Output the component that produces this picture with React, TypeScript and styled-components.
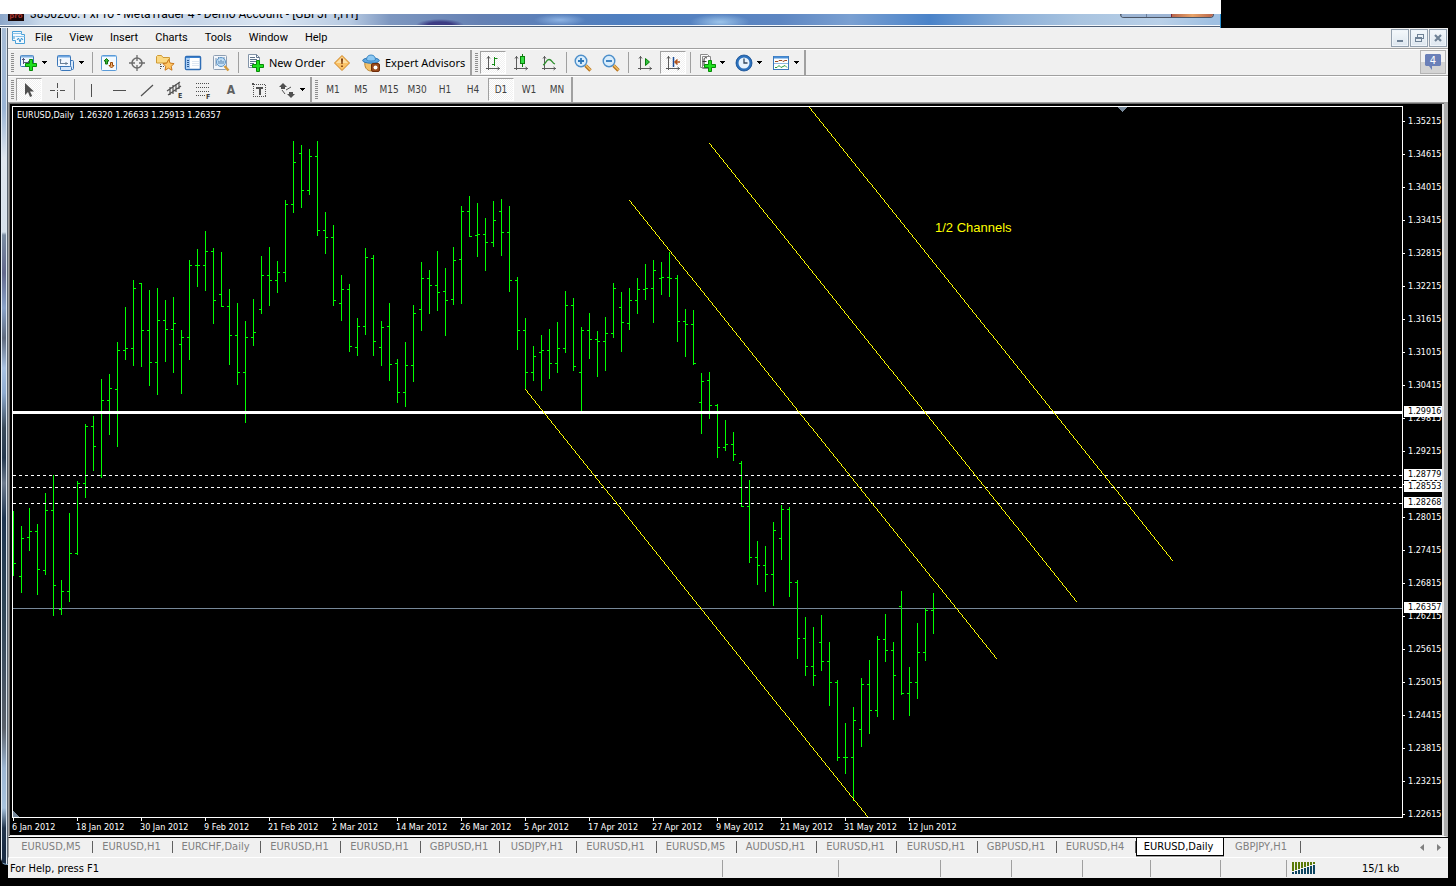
import React from "react";
import styled, { createGlobalStyle, css } from "styled-components";

const UI_FONT = `"Noto Sans", "Open Sans", sans-serif`;
const TAHOMA = `"DejaVu Sans Condensed", "Noto Sans", sans-serif`;

const GlobalStyle = createGlobalStyle`
  * { box-sizing: border-box; }
  html, body { margin: 0; background: #000; }
  body { font: 11px ${UI_FONT}; color: #000; }
  button { font: inherit; color: inherit; border: 0; padding: 0; margin: 0; background: none; white-space: nowrap; }
  svg { display: block; flex: none; }
`;

/* ---------- window frame ---------- */

const Page = styled.div`
  min-height: 100vh;
  background: #000;
`;

const TopStrip = styled.header`
  margin-right: 235px;
  padding-top: 14px;
  background: #fff;
`;

const TitleBar = styled.div`
  display: flex;
  align-items: flex-start;
  height: 14px;
  padding-left: 8px;
  padding-right: 6px;
  overflow: hidden;
  border-right: 1px solid #2a8fd0;
  background:
    linear-gradient(#0000 11px, #f4f8fc 11px, #f4f8fc 12px, #4f6078 12px, #4f6078 13px, #eef3f8 13px),
    radial-gradient(ellipse 24px 6px at 440px 11px, #3c3c84 50%, #3c3c8400),
    radial-gradient(ellipse 26px 6px at 560px 6px, #8fb4e4, #8fb4e400),
    radial-gradient(ellipse 30px 8px at 720px 8px, #9cc4ea, #9cc4ea00),
    linear-gradient(90deg, #8ba6c9 0, #c8d8ea 40px, #e4ecf5 120px, #c6d5e8 190px, #dbe6f2 270px, #b7cae2 350px, #7d97c0 390px, #6581b4 480px, #4f7fc0 620px, #5d86c2 780px, #7aa0d2 850px, #4a83c9 930px, #8bafd8 1010px, #a9c4e0 1080px, #b9d0e8 1160px, #9fc0e2 1213px);
`;

const TitleText = styled.span`
  flex: 1;
  margin: -8px 0 0 6px;
  font-family: Roboto, sans-serif;
  font-size: 12px;
  line-height: 16px;
  white-space: nowrap;
`;

const Caption = styled.div`
  display: flex;
  height: 4px;
  border: 1px solid #4b5565;
  border-top: 0;
  border-radius: 0 0 4px 4px;
  overflow: hidden;
`;

const CaptionPart = styled.span<{ $close?: boolean }>`
  width: ${(p) => (p.$close ? 42 : 25)}px;
  border-left: 1px solid ${(p) => (p.$close ? "#7c2436" : "#6a7f9c")};
  background: ${(p) => (p.$close ? "linear-gradient(90deg, #b8664c, #e8a368 50%, #b8664c)" : "#9db5d4")};
`;

const Body = styled.div`
  display: flex;
  margin-right: 8px;
`;

const LeftEdge = styled.div`
  width: 8px;
  margin-bottom: 13px;
  border-left: 1px solid #10161e;
  border-bottom: 1px solid #7fa6c8;
  border-bottom-left-radius: 7px;
  background:
    linear-gradient(90deg, #e3ebf3 1px, #0000 1px, #0000 5px, #dde6ee 5px, #dde6ee 6px, #5a6470 6px),
    linear-gradient(#a8bdd6, #9ab4d4 80px, #dfe6ee 130px, #d4dfea 204px, #7b8da3 207px, #62688c 245px, #8aa3c9 280px, #5e6a7e 310px, #a9c2e2 340px, #8fabcf 365px, #3a4a5a 400px, #24384e 430px, #6d7b8e 455px, #1e3550 490px, #2e4455 580px, #404f60 640px, #59606a 700px, #9db6d2 740px, #a8c3de 780px, #22354c 800px, #1a2c44 820px);
`;

const WindowArea = styled.main`
  flex: 1;
  min-width: 0;
  background: #f0f0f0;
`;

/* ---------- menu ---------- */

const MenuBar = styled.nav`
  display: flex;
  align-items: center;
  height: 22px;
  padding: 0 1px 2px 3px;
  border-bottom: 1px solid #fff;
  box-shadow: inset 0 -1px #a0a0a0;
`;

const MenuItem = styled.button`
  height: 18px;
  padding: 0 8px;
  font-family: Roboto, sans-serif;
  font-size: 11px;
  line-height: 18px;
`;

const MenuItems = styled.div`
  display: flex;
  flex: 1;
  gap: 1px;
`;

const MdiButtons = styled.div`
  display: flex;
  gap: 1px;
`;

const MdiButton = styled.button`
  display: grid;
  place-items: center;
  width: 18px;
  height: 18px;
  border: 1px solid #93a0ae;
  background: linear-gradient(#f4f8fb, #dde6ef);
  box-shadow: inset 0 0 0 1px #eff5fa;
`;

/* ---------- tool bars ---------- */

const ToolRow = styled.div<{ $last?: boolean }>`
  display: flex;
  align-items: stretch;
  height: ${(p) => (p.$last ? 25 : 27)}px;
  ${(p) =>
    !p.$last &&
    css`
      padding-bottom: 2px;
      background: linear-gradient(#f0f0f0 25px, #a0a0a0 25px, #a0a0a0 26px, #fff 26px);
    `}
`;

const ToolGroup = styled.div`
  display: flex;
  align-items: center;
  border-right: 2px solid #a0a0a0;
`;

const Grip = styled.span`
  width: 3px;
  height: 19px;
  margin: 0 1px 0 3px;
  background: repeating-linear-gradient(#8e8e8e 0 1px, #f0f0f0 1px 2px);
`;

const Divider = styled.span`
  width: 1px;
  height: 21px;
  margin: 0 2px 0 3px;
  background: #a0a0a0;
`;

const ToolButton = styled.button<{ $pressed?: boolean }>`
  display: grid;
  place-items: center;
  width: 26px;
  height: 23px;
  margin: 0 1px;
  ${(p) =>
    p.$pressed &&
    css`
      border: 1px solid #fff;
      border-top-color: #a0a0a0;
      border-left-color: #a0a0a0;
      background: repeating-conic-gradient(#fff 0 25%, #f0f0f0 0 50%) 0 0 / 2px 2px;
    `}
`;

const DropButton = styled.button`
  display: flex;
  align-items: center;
  gap: 4px;
  width: 37px;
  padding-left: 5px;
`;

const LabelButton = styled.button<{ $width: number }>`
  display: flex;
  align-items: center;
  gap: 4px;
  width: ${(p) => p.$width}px;
  padding-left: 6px;
  font: 11px ${UI_FONT};
`;

const Period = styled(ToolButton)`
  font: 10px ${TAHOMA};
  color: #404040;
`;

const LetterTool = styled(ToolButton)`
  font: bold 12px ${TAHOMA};
  color: #606060;
`;

const ChatButton = styled.button`
  display: grid;
  place-items: center;
  width: 26px;
  height: 24px;
  margin: 0 2px 0 auto;
  border: 1px solid #b4b4b4;
  background: linear-gradient(#f2f2f2 50%, #d4d4d4 50%);
`;

/* ---------- chart ---------- */

const ChartFrame = styled.section`
  display: grid;
  grid-template-columns: minmax(0, 1fr) 39px;
  padding: 2px 2px 0 2px;
  border-top: 1px solid #a0a0a0;
  border-left: 1px solid #a0a0a0;
  border-right: 4px solid #ababab;
  border-bottom: 1px solid #fff;
  background: #000;
  box-shadow: inset 1px 1px #696969, inset -2px -1px #e3e3e3;
  color: #fff;
  font: 9px ${TAHOMA};
`;

const Plot = styled.div`
  position: relative;
  height: 712px;
  margin-left: 1px;
  margin-top: 1px;
  border: 1px solid #fff;
  overflow: hidden;
`;

const Quote = styled.div`
  position: absolute;
  top: 2px;
  left: 4px;
  line-height: 12px;
  white-space: pre;
`;

const PriceAxis = styled.div`
  position: relative;
  height: 712px;
  overflow: hidden;
`;

const PriceTick = styled.div`
  display: flex;
  align-items: center;
  gap: 3px;
  height: 33px;
  line-height: 11px;
  &::before {
    content: "";
    width: 2px;
    height: 1px;
    background: #fff;
  }
`;

const PriceTag = styled.div<{ $y: number }>`
  position: absolute;
  top: ${(p) => p.$y}px;
  left: 1px;
  width: 38px;
  height: 11px;
  padding-left: 4px;
  background: #fff;
  color: #000;
  line-height: 11px;
`;

const TimeAxis = styled.div`
  display: flex;
  height: 18px;
  margin-left: 1px;
  overflow: hidden;
`;

const TimeTick = styled.div`
  flex: none;
  width: 64px;
  line-height: 12px;
  white-space: nowrap;
  &::before {
    content: "";
    display: block;
    width: 1px;
    height: 3px;
    margin-left: 1px;
    background: #fff;
  }
`;

/* ---------- chart tabs and status ---------- */

const TabStrip = styled.div`
  display: flex;
  height: 21px;
  border-top: 1px solid #000;
  border-bottom: 1px solid #fff;
  border-left: 1px solid #a0a0a0;
  padding-left: 3px;
  font: 11px ${TAHOMA};
`;

const Tab = styled.button<{ $width: number; $active?: boolean }>`
  flex: none;
  width: ${(p) => p.$width}px;
  height: 18px;
  padding-right: 3px;
  color: #808080;
  line-height: 16px;
  background: linear-gradient(#606060, #606060) right 0 top 3px / 1px 12px no-repeat;
  ${(p) =>
    p.$active &&
    css`
      border: 1px solid #000;
      border-top: 0;
      background: #fff;
      color: #000;
      box-shadow: 0 1px #a0a0a0;
    `}
`;

const Scroller = styled.div`
  display: flex;
  gap: 8px;
  align-items: center;
  margin-left: auto;
  padding-right: 5px;
`;

const ScrollButton = styled.button`
  display: grid;
  place-items: center;
  width: 9px;
`;

const StatusBar = styled.footer`
  display: flex;
  align-items: center;
  height: 20px;
  font: 11px ${TAHOMA};
`;

const StatusHelp = styled.div`
  flex: 1;
  padding-left: 2px;
`;

const StatusCell = styled.div<{ $width: number }>`
  display: flex;
  align-items: center;
  gap: 46px;
  width: ${(p) => p.$width}px;
  height: 17px;
  padding-left: 5px;
  border-left: 1px solid #a0a0a0;
`;

/* ---------- icons ---------- */

const Svg = ({ w = 18, h = 18, children, crisp }: { w?: number; h?: number; children: React.ReactNode; crisp?: boolean }) => (
  <svg width={w} height={h} viewBox={`0 0 ${w} ${h}`} fill="none" aria-hidden="true" shapeRendering={crisp ? "crispEdges" : undefined}>
    {children}
  </svg>
);

const Caret = () => (
  <Svg w={5} h={3} crisp>
    <path d="M0 0h5v1h-1v1h-1v1h-1v-1h-1v-1h-1z" fill="#000" />
  </Svg>
);

const GreenPlus = ({ x, y }: { x: number; y: number }) => (
  <path
    transform={`translate(${x} ${y})`}
    d="M4.500 .5h3v4h4v3h-4v4h-3v-4h-4v-3h4z"
    fill="#1fe01f"
    stroke="#078a07"
  />
);

const DocIcon = () => (
  <Svg w={16} h={16}>
    <path d="M1.500 1.500h9v3h3v9h-9v-3h-3z" fill="#f3f9fe" stroke="#4aa0d8" />
    <path d="M1.500 3.500h9M4.500 6.500h9" stroke="#8cc4ea" />
    <path d="M3 6v3M6 10l1.500-2 1.500 4 1.500-4 1.500 2" stroke="#3b93d0" />
  </Svg>
);

const NewChartIcon = () => (
  <Svg>
    <rect x=".5" y="1.500" width="13" height="11" rx="1" fill="#eef6ff" stroke="#3a76b8" />
    <path d="M1 2.500h12" stroke="#7fb0e0" strokeWidth="2" />
    <path d="M3.500 4v6M2 5.500h3M4 8.500h6M8.500 7v3" stroke="#557" />
    <GreenPlus x={5} y={5} />
  </Svg>
);

const ProfilesIcon = () => (
  <Svg>
    <rect x="5.500" y="6.500" width="11" height="9" rx="1" fill="#d8e8fa" stroke="#3a76b8" />
    <rect x="3.500" y="12.500" width="11" height="4" rx="1" fill="#d8e8fa" stroke="#3a76b8" />
    <rect x=".5" y="1.500" width="13" height="11" rx="1" fill="#f2f8ff" stroke="#3a76b8" />
    <path d="M1 2.500h12" stroke="#6fa6e0" strokeWidth="2" />
    <path d="M3.500 5v5M2.500 6h2M3 9.500h8M9 8v3" stroke="#6a8098" />
  </Svg>
);

const MarketIcon = () => (
  <Svg>
    <rect x="1.500" y="1.500" width="15" height="15" rx="1" fill="#f4faff" stroke="#5b9bd8" />
    <path d="M2 2.500h14" stroke="#9cc8f0" />
    <path d="M6.500 4.500l2.500 2.500h-1.500v3h-2v-3h-1.500z" fill="#35b835" stroke="#107010" />
    <path d="M11.500 14l2.500-2.500h-1.500v-3h-2v3h-1.500z" fill="#f0b070" stroke="#9a4a08" />
  </Svg>
);

const TargetIcon = () => (
  <Svg>
    <circle cx="9" cy="9" r="5" stroke="#6c6c6c" strokeWidth="1.500" />
    <path d="M9 1v6M9 11v6M1 9h6M11 9h6" stroke="#6c6c6c" strokeWidth="1.300" />
  </Svg>
);

const STAR = "M0 -5.500l1.700 3.600 3.900 .5-2.900 2.700 .8 3.900-3.500-2-3.500 2 .8-3.900-2.900-2.700 3.900-.5z";

const FolderStarIcon = () => (
  <Svg w={19}>
    <path d="M.5 9V2.500l1-1h4l1.500 2h6.500V9z" fill="#fbd983" stroke="#cf9a35" />
    <path d="M4.500 10v6M5 12.500h3" stroke="#555" strokeDasharray="1 1" />
    <path transform="translate(12.500 11)" d={STAR} fill="#ffc766" stroke="#c9781c" />
  </Svg>
);

const ListIcon = () => (
  <Svg>
    <rect x="1.500" y="2.500" width="15" height="13" rx="1" fill="#fff" stroke="#2f6db5" strokeWidth="1.500" />
    <path d="M2 3.500h14" stroke="#3b82d0" />
    <rect x="2" y="4" width="4" height="11" fill="#a9cdf4" />
    <path d="M3 6.500h2M3 8.500h2M3 10.500h2M3 12.500h2" stroke="#2a5a98" />
    <path d="M8 7.500h7M8 9.500h7M8 11.500h7" stroke="#dfe8f2" />
  </Svg>
);

const TesterIcon = () => (
  <Svg>
    <rect x="1.500" y="1.500" width="13" height="14" rx="1" fill="#f2f6fb" stroke="#8e9eb2" />
    <path d="M4 4v8M6.500 3v5M9 4v4M12 3v6" stroke="#7890aa" />
    <circle cx="9" cy="8" r="4.500" fill="#b8dcf8cc" stroke="#5d94c8" />
    <path d="M7 7v3M9 6v4M11 7v3" stroke="#5b85b0" />
    <path d="M12.500 12l4 4.500" stroke="#d39a3c" strokeWidth="2.500" />
  </Svg>
);

const OrderIcon = () => (
  <Svg>
    <path d="M1.500 .5h8l3 3v10h-11z" fill="#fbfdff" stroke="#8394a8" />
    <path d="M9.500 .5v3h3" stroke="#60748c" />
    <path d="M3 3.500h5M3 5.500h7M3 7.500h7M3 9.500h4M3 11.500h3" stroke="#5f748c" />
    <GreenPlus x={5} y={6} />
  </Svg>
);

const AlertIcon = () => (
  <Svg>
    <path d="M9 1.500L16.500 9 9 16.500 1.500 9z" fill="#fbc266" stroke="#d08420" strokeLinejoin="round" />
    <path d="M9 3L15 9H3z" fill="#fde0a4" />
    <path d="M8 4.500h2l-.4 5.500h-1.200zM8.200 11.500h1.600v1.600h-1.600z" fill="#7a3608" />
  </Svg>
);

const AdvisorIcon = () => (
  <Svg w={19}>
    <path d="M3 8h12c1 5-2 9-6 9S2 13 3 8z" fill="#f3c26b" stroke="#b9822c" />
    <ellipse cx="9" cy="6.500" rx="8.300" ry="2.700" fill="#5fa8e2" stroke="#2e75b4" />
    <path d="M4.500 6c0-3 1.500-5 4.500-5s4.500 2 4.500 5c-2 1.400-7 1.400-9 0z" fill="#8cc8f2" stroke="#3f8ac6" />
    <rect x="9.500" y="9.500" width="8" height="8" rx="1.500" fill="#9a4a1c" stroke="#6e2d0a" />
    <circle cx="13.500" cy="13.500" r="2" fill="#fff" />
  </Svg>
);

const Axes = () => <path d="M4.500 2v14M2 14.500h14M3 4.500l1.500-2 1.500 2M13.500 13l2 1.500-2 1.500" stroke="#5c5c5c" />;

const BarsIcon = () => (
  <Svg>
    <Axes />
    <path d="M10.500 3v9M10.500 4.500h3M8 10.500h3" stroke="#148a14" />
  </Svg>
);
const CandleIcon = () => (
  <Svg>
    <Axes />
    <path d="M10.500 0v13" stroke="#0b7d0b" />
    <rect x="8.500" y="2.500" width="4" height="7" fill="#35dd45" stroke="#0b7d0b" />
  </Svg>
);
const LineIcon = () => (
  <Svg>
    <Axes />
    <path d="M3 11c3-1 3-5.500 6-5.500S12 9 15 10" stroke="#2f8f2f" strokeWidth="1.300" />
  </Svg>
);
const Magnifier = ({ plus }: { plus?: boolean }) => (
  <Svg>
    <path d="M11.500 11.500l5 5" stroke="#b8731c" strokeWidth="3.400" />
    <path d="M11.500 11l5 5" stroke="#f0bd62" strokeWidth="1.600" />
    <circle cx="7" cy="7" r="5.800" fill="#d9edfc" stroke="#4d8fca" strokeWidth="1.400" />
    <path d={plus ? "M4 7h6M7 4v6" : "M4 7h6"} stroke="#2f78ba" strokeWidth="1.800" />
  </Svg>
);
const ScrollIcon = () => (
  <Svg>
    <Axes />
    <path d="M9.500 4.500v7l4-3.500z" fill="#2fc43f" stroke="#0b7d0b" />
  </Svg>
);
const ShiftIcon = () => (
  <Svg>
    <Axes />
    <path d="M9.500 3v10" stroke="#1c4f9a" strokeWidth="1.500" />
    <path d="M16 8h-4.500M13.500 5.500L11 8l2.500 2.500" stroke="#b0521a" strokeWidth="1.500" />
  </Svg>
);
const IndicatorIcon = () => (
  <Svg>
    <path d="M4.500 2.500h8v12h-8zM2.500 .5h7l3 3v10h-10z" fill="#fbfbfb" stroke="#8b8b8b" />
    <path d="M9 4c-2-1-3 0-3 2v6M4.500 7.500h4" stroke="#333" />
    <GreenPlus x={6} y={6} />
  </Svg>
);
const ClockIcon = () => (
  <Svg>
    <circle cx="9" cy="9" r="6.800" fill="#e6f2fd" stroke="#2c71bd" strokeWidth="2.600" />
    <circle cx="9" cy="9" r="8" stroke="#174f92" strokeWidth=".8" />
    <path d="M9 4.500V9h3.500" stroke="#33475e" strokeWidth="1.300" />
  </Svg>
);
const TemplateIcon = () => (
  <Svg>
    <rect x="1.500" y="2.500" width="15" height="13" fill="#fff" stroke="#3a78bb" />
    <path d="M2 3.500h14" stroke="#4a90d8" strokeWidth="2" />
    <path d="M2 9.500h14" stroke="#90b8e0" />
    <path d="M3 7.500h3l1-1h3l1 1 2-1h2" stroke="#a04a20" />
    <path d="M3 13.500h2l2-2 2 2 2-1 2-1 2 2" stroke="#2c9a3a" />
  </Svg>
);

const CursorIcon = () => (
  <Svg>
    <path d="M5 2v12l3-3 2 5 2.200-1-2.200-4.500h4z" fill="#505050" />
  </Svg>
);
const CrossIcon = () => (
  <Svg crisp>
    <path d="M9.500 2v5M9.500 11v6M2 9.500h5M12 9.500h5M9 9.500h1" stroke="#505050" />
  </Svg>
);
const VLineIcon = () => (
  <Svg crisp>
    <path d="M9.500 3v13" stroke="#505050" />
  </Svg>
);
const HLineIcon = () => (
  <Svg crisp>
    <path d="M3 9.500h13" stroke="#505050" />
  </Svg>
);
const TrendIcon = () => (
  <Svg>
    <path d="M3 15L15 4" stroke="#505050" strokeWidth="1.200" />
  </Svg>
);
const SmallLetter = styled.text`
  font: bold 7px ${TAHOMA};
  fill: #404040;
`;
const ChannelIcon = () => (
  <Svg>
    <path d="M1 10L14 1M2 14L15 5M4 6v8M7 4v9M10 3v8M13 1v7" stroke="#505050" strokeWidth="1.200" />
    <SmallLetter x="12" y="17">E</SmallLetter>
  </Svg>
);
const FiboIcon = () => (
  <Svg crisp>
    <path d="M2 2.500h14M2 6.500h14M2 10.500h14M2 14.500h9" stroke="#505050" strokeDasharray="1 1" />
    <SmallLetter x="12" y="18">F</SmallLetter>
  </Svg>
);
const LabelIcon = () => (
  <Svg crisp>
    <rect x="3.500" y="3.500" width="12" height="12" stroke="#505050" strokeDasharray="1 1" />
    <path d="M2 2h2v2h-2zM6 6h7v2h-7zM8.500 6h2v8h-2z" fill="#505050" />
  </Svg>
);
const ArrowsIcon = () => (
  <Svg>
    <path d="M5 2l4 4H7v2H3V6H1zM13 17l-4-4h2v-2h4v2h2z" fill="#505050" />
    <path d="M4 9l3 4M8 9l5-3" stroke="#505050" />
  </Svg>
);
const ChatIcon = () => (
  <svg width="16" height="16" viewBox="0 0 16 16" aria-hidden="true">
    <path d="M1 0h14l1 1v10l-1 1H7v4l-3-4H1l-1-1V1z" fill="#6b80b8" />
    <text x="8" y="10" textAnchor="middle" fill="#fff" fontSize="10" fontFamily="DejaVu Sans">4</text>
  </svg>
);
const LogoIcon = () => (
  <svg width="16" height="16" viewBox="0 0 16 16" aria-hidden="true">
    <rect width="16" height="16" fill="#170607" />
    <text x="8" y="13" textAnchor="middle" fill="#a3352f" fontSize="7" fontWeight="bold" fontFamily="DejaVu Sans">pro</text>
  </svg>
);
const LogoBox = styled.span`
  margin-top: -9px;
`;

const TrafficIcon = () => (
  <Svg w={24} h={12} crisp>
    {[...Array(8)].map((_, i) => {
      const split = 8 - i;
      return (
        <g key={i}>
          <rect x={i * 3} y="0" width="2" height={split + 1} fill="#5a7a08" />
          <rect x={i * 3} y={split + 2} width="2" height={10 - split} fill="#0c4460" />
        </g>
      );
    })}
  </Svg>
);

/* ---------- data ---------- */

// Daily bars, eight pixels apart: [high, low, open, close] as heights on the chart.
const BARS: [number, number, number, number][] = [
  [511, 576, 563, 563], [526, 593, 576, 538], [508, 551, 537, 531], [524, 595, 531, 569], [493, 575, 570, 510],
  [475, 616, 510, 585], [580, 615, 609, 591], [513, 602, 591, 553], [481, 555, 553, 483], [424, 498, 483, 426],
  [416, 471, 426, 446], [379, 478, 475, 400], [374, 435, 400, 388], [342, 447, 389, 350], [307, 360, 350, 348],
  [280, 366, 348, 288], [283, 367, 283, 330], [290, 386, 330, 362], [288, 395, 362, 320], [300, 362, 320, 329],
  [297, 373, 329, 323], [330, 394, 344, 337], [260, 360, 337, 265], [249, 287, 265, 265], [231, 291, 265, 251],
  [248, 324, 251, 300], [252, 307, 294, 306], [289, 365, 306, 335], [303, 385, 335, 372], [321, 423, 372, 337],
  [299, 346, 337, 332], [256, 314, 309, 275], [247, 306, 275, 280], [261, 293, 280, 272], [200, 282, 272, 204],
  [141, 213, 204, 162], [145, 208, 153, 190], [149, 195, 190, 156], [141, 236, 156, 230], [212, 254, 230, 237],
  [225, 306, 237, 300], [275, 321, 303, 289], [284, 352, 289, 346], [318, 356, 347, 326], [248, 335, 326, 257],
  [255, 356, 258, 341], [321, 366, 347, 327], [303, 381, 326, 364], [359, 403, 363, 392], [342, 407, 392, 365],
  [305, 382, 365, 313], [262, 331, 309, 278], [270, 314, 278, 285], [251, 311, 285, 292], [268, 336, 291, 300],
  [247, 305, 299, 260], [206, 304, 259, 211], [196, 237, 211, 236], [203, 257, 235, 234], [218, 271, 234, 242],
  [201, 247, 242, 220], [199, 256, 211, 232], [206, 292, 232, 280], [277, 350, 280, 330], [318, 390, 330, 372],
  [346, 381, 372, 356], [335, 391, 352, 350], [329, 379, 350, 363], [322, 373, 363, 348], [291, 353, 348, 305],
  [298, 371, 305, 366], [327, 411, 372, 330], [313, 359, 330, 339], [331, 377, 339, 341], [317, 371, 341, 333],
  [283, 338, 333, 288], [292, 352, 307, 322], [288, 330, 323, 300], [278, 314, 300, 289], [264, 300, 289, 288],
  [260, 323, 288, 270], [262, 295, 278, 277], [252, 297, 277, 278], [275, 342, 278, 321], [309, 357, 321, 324],
  [310, 365, 324, 363], [373, 434, 402, 381], [372, 419, 380, 405], [404, 458, 405, 447], [420, 451, 447, 444],
  [432, 461, 444, 454], [461, 507, 463, 506], [480, 563, 506, 557], [541, 585, 557, 565], [546, 592, 565, 574],
  [522, 606, 574, 530], [505, 560, 538, 509], [507, 597, 509, 582], [580, 659, 582, 638], [617, 676, 638, 666],
  [627, 686, 666, 675], [615, 671, 642, 661], [642, 706, 661, 682], [680, 761, 682, 757], [723, 774, 757, 757],
  [707, 801, 757, 720], [678, 747, 729, 684], [660, 734, 684, 710], [636, 717, 710, 639], [614, 662, 639, 650],
  [642, 720, 650, 675], [591, 695, 606, 693], [667, 716, 693, 682], [623, 699, 682, 652], [608, 661, 652, 610],
  [593, 634, 610, 608],
];

const barPath = BARS.map(([high, low, open, close], i) => {
  const x = 13 + i * 8;
  return `M${x} ${high}h1V${low}h-1zM${x - 2} ${open}h2v1h-2zM${x + 1} ${close}h2v1h-2z`;
}).join("");

// Trend lines [x1, y1, x2, y2], drawn unsmoothed with one pixel on each row.
const TRENDS = [
  [525, 389, 867, 816],
  [629, 200, 996, 658],
  [709, 143, 1076, 601],
  [809, 107, 1172, 560],
];

const trendPath = TRENDS.map(([x1, y1, x2, y2]) =>
  Array.from({ length: y2 - y1 + 1 }, (_, i) => {
    const x = Math.round(x1 + (i * (x2 - x1)) / (y2 - y1));
    return `M${x} ${y1 + i}h1v1h-1z`;
  }).join(""),
).join("");

const DATES = [
  "6 Jan 2012", "18 Jan 2012", "30 Jan 2012", "9 Feb 2012", "21 Feb 2012", "2 Mar 2012", "14 Mar 2012", "26 Mar 2012",
  "5 Apr 2012", "17 Apr 2012", "27 Apr 2012", "9 May 2012", "21 May 2012", "31 May 2012", "12 Jun 2012",
];

const PRICES = [...Array(22)].map((_, i) => (1.35215 - i * 0.006).toFixed(5));

const TAGS: [string, number][] = [
  ["1.29916", 301], ["1.28779", 364], ["1.28553", 376], ["1.28268", 392], ["1.26357", 497],
];

const TABS: [string, number][] = [
  ["EURUSD,M5", 81], ["EURUSD,H1", 80], ["EURCHF,Daily", 88], ["EURUSD,H1", 80], ["EURUSD,H1", 80], ["GBPUSD,H1", 79],
  ["USDJPY,H1", 77], ["EURUSD,H1", 80], ["EURUSD,M5", 80], ["AUDUSD,H1", 80], ["EURUSD,H1", 80], ["EURUSD,H1", 81],
  ["GBPUSD,H1", 79], ["EURUSD,H4", 79], ["EURUSD,Daily", 88], ["GBPJPY,H1", 77],
];

const MENUS = ["File", "View", "Insert", "Charts", "Tools", "Window", "Help"];
const PERIODS = ["M1", "M5", "M15", "M30", "H1", "H4", "D1", "W1", "MN"];

/* ---------- composition ---------- */

const Tool = ({ name, icon, pressed }: { name: string; icon: React.ReactNode; pressed?: boolean }) => (
  <ToolButton aria-label={name} aria-pressed={pressed} $pressed={pressed}>
    {icon}
  </ToolButton>
);

const Drop = ({ name, icon }: { name: string; icon: React.ReactNode }) => (
  <DropButton aria-label={name} aria-haspopup="menu">
    {icon}
    <Caret />
  </DropButton>
);

const Chart = () => (
  <ChartFrame>
    <Plot>
      <svg width="100%" height="710" shapeRendering="crispEdges" role="img" aria-label="EURUSD daily bar chart">
        <rect y="501" width="100%" height="1" fill="#778899" />
        <g transform="translate(-13 -107)">
          <path d={barPath} fill="#00ff00" />
          <path d="M13 811v6h6z" fill="#778899" />
        </g>
        <rect y="304" width="100%" height="3" fill="#fff" />
        {[368, 380, 396].map((y) => (
          <line key={y} x1="0" x2="100%" y1={y + 0.5} y2={y + 0.5} stroke="#fff" strokeDasharray="3 3" />
        ))}
        <g transform="translate(-13 -107)">
          <path d={trendPath} fill="#ffff00" />
          <path d="M1118 107h9l-4.500 5z" fill="#778899" />
          <text x="935" y="232" fill="#ffff00" fontSize="13" fontFamily="Liberation Sans, sans-serif">
            1/2 Channels
          </text>
        </g>
      </svg>
      <Quote>{"EURUSD,Daily  1.26320 1.26633 1.25913 1.26357"}</Quote>
    </Plot>
    <PriceAxis>
      {PRICES.map((price) => (
        <PriceTick key={price}>{price}</PriceTick>
      ))}
      {TAGS.map(([price, y]) => (
        <PriceTag key={price} $y={y}>
          {price}
        </PriceTag>
      ))}
    </PriceAxis>
    <TimeAxis>
      {DATES.map((date) => (
        <TimeTick key={date}>{date}</TimeTick>
      ))}
    </TimeAxis>
  </ChartFrame>
);

export default function App() {
  return (
    <Page>
      <GlobalStyle />
      <TopStrip>
        <TitleBar>
          <LogoBox>
            <LogoIcon />
          </LogoBox>
          <TitleText>3850206: FxPro - MetaTrader 4 - Demo Account - [GBPJPY,H1]</TitleText>
          <Caption>
            <CaptionPart />
            <CaptionPart />
            <CaptionPart $close />
          </Caption>
        </TitleBar>
      </TopStrip>
      <Body>
        <LeftEdge />
        <WindowArea>
          <MenuBar>
            <DocIcon />
            <MenuItems>
              {MENUS.map((menu) => (
                <MenuItem key={menu}>{menu}</MenuItem>
              ))}
            </MenuItems>
            <MdiButtons>
              <MdiButton aria-label="Minimize">
                <Svg w={10} h={10} crisp>
                  <path d="M2 7h6v2H2z" fill="#6f8296" />
                </Svg>
              </MdiButton>
              <MdiButton aria-label="Restore">
                <Svg w={10} h={10} crisp>
                  <path d="M3 1.500h6M3.500 1v3M9.500 1v5M8 5.500h2M1 4.500h6M1 5.500h6M1.500 4v5M7.500 4v5M1 8.500h7" stroke="#6f8296" />
                </Svg>
              </MdiButton>
              <MdiButton aria-label="Close">
                <Svg w={10} h={10}>
                  <path d="M2 2l6 6M8 2l-6 6" stroke="#6f8296" strokeWidth="2.200" />
                </Svg>
              </MdiButton>
            </MdiButtons>
          </MenuBar>

          <ToolRow>
            <ToolGroup>
              <Grip />
              <Drop name="New chart" icon={<NewChartIcon />} />
              <Drop name="Profiles" icon={<ProfilesIcon />} />
              <Divider />
              <Tool name="Market Watch" icon={<MarketIcon />} />
              <Tool name="Data Window" icon={<TargetIcon />} />
              <Tool name="Navigator" icon={<FolderStarIcon />} />
              <Tool name="Terminal" icon={<ListIcon />} />
              <Tool name="Strategy Tester" icon={<TesterIcon />} />
              <Divider />
              <LabelButton $width={87}>
                <OrderIcon />
                New Order
              </LabelButton>
              <Tool name="MetaEditor" icon={<AlertIcon />} />
              <LabelButton $width={114}>
                <AdvisorIcon />
                Expert Advisors
              </LabelButton>
            </ToolGroup>
            <ToolGroup>
              <Grip />
              <Tool name="Bar Chart" icon={<BarsIcon />} pressed />
              <Tool name="Candlesticks" icon={<CandleIcon />} />
              <Tool name="Line Chart" icon={<LineIcon />} />
              <Divider />
              <Tool name="Zoom In" icon={<Magnifier plus />} />
              <Tool name="Zoom Out" icon={<Magnifier />} />
              <Divider />
              <Tool name="Auto Scroll" icon={<ScrollIcon />} />
              <Tool name="Chart Shift" icon={<ShiftIcon />} pressed />
              <Divider />
              <Drop name="Indicators" icon={<IndicatorIcon />} />
              <Drop name="Periods" icon={<ClockIcon />} />
              <Drop name="Templates" icon={<TemplateIcon />} />
            </ToolGroup>
            <ChatButton aria-label="4 messages">
              <ChatIcon />
            </ChatButton>
          </ToolRow>

          <ToolRow $last>
            <ToolGroup>
              <Grip />
              <Tool name="Cursor" icon={<CursorIcon />} pressed />
              <Tool name="Crosshair" icon={<CrossIcon />} />
              <Divider />
              <Tool name="Vertical Line" icon={<VLineIcon />} />
              <Tool name="Horizontal Line" icon={<HLineIcon />} />
              <Tool name="Trendline" icon={<TrendIcon />} />
              <Tool name="Equidistant Channel" icon={<ChannelIcon />} />
              <Tool name="Fibonacci Retracement" icon={<FiboIcon />} />
              <LetterTool>A</LetterTool>
              <Tool name="Text Label" icon={<LabelIcon />} />
              <Drop name="Arrows" icon={<ArrowsIcon />} />
            </ToolGroup>
            <ToolGroup>
              <Grip />
              {PERIODS.map((period) => (
                <Period key={period} $pressed={period === "D1"}>
                  {period}
                </Period>
              ))}
            </ToolGroup>
          </ToolRow>

          <Chart />

          <TabStrip role="tablist">
            {TABS.map(([name, width], i) => (
              <Tab key={i} role="tab" aria-selected={i === 14} $width={width} $active={i === 14}>
                {name}
              </Tab>
            ))}
            <Scroller>
              <ScrollButton aria-label="Scroll left">
                <Svg w={4} h={7}>
                  <path d="M4 0v7L0 3.500z" fill="#808080" />
                </Svg>
              </ScrollButton>
              <ScrollButton aria-label="Scroll right">
                <Svg w={4} h={7}>
                  <path d="M0 0v7l4-3.500z" fill="#808080" />
                </Svg>
              </ScrollButton>
            </Scroller>
          </TabStrip>

          <StatusBar>
            <StatusHelp>For Help, press F1</StatusHelp>
            {[116, 102, 71, 71, 68, 70, 66].map((width, i) => (
              <StatusCell key={i} $width={width} />
            ))}
            <StatusCell $width={162}>
              <TrafficIcon />
              15/1 kb
            </StatusCell>
          </StatusBar>
        </WindowArea>
      </Body>
    </Page>
  );
}
